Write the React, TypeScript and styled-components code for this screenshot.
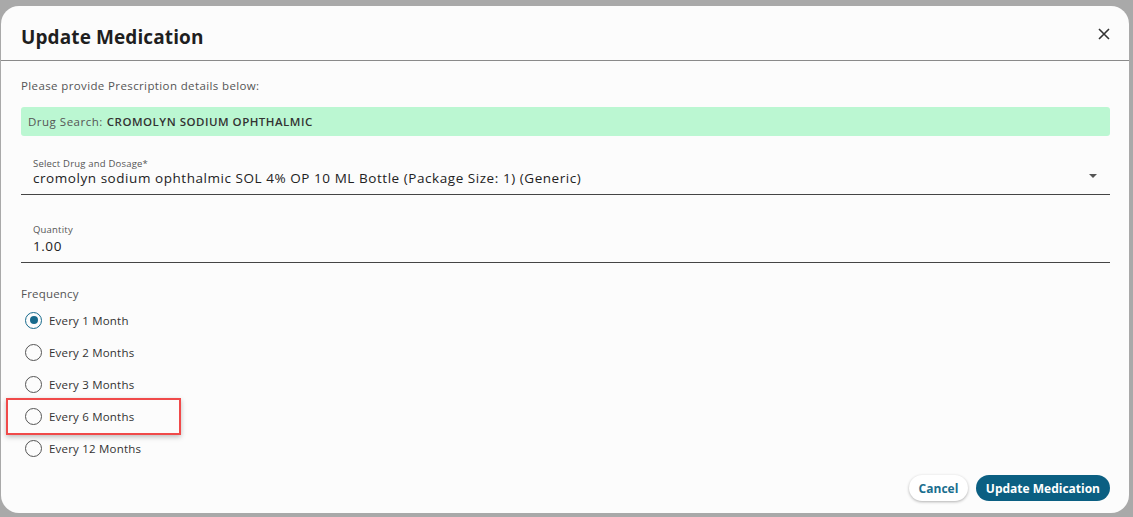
import React from "react";
import styled, { createGlobalStyle } from "styled-components";

const Global = createGlobalStyle`
  html, body { margin: 0; padding: 0; background: #a9a9a9; }
  body { font-family: "Open Sans", "Liberation Sans", sans-serif; }
  * { box-sizing: border-box; }
`;

const Backdrop = styled.div`
  width: 1133px;
  height: 517px;
  padding: 6px 4px 4px 1px;
  background: #a9a9a9;
  overflow: hidden;
`;

const Dialog = styled.div`
  position: relative;
  width: 1128px;
  height: 507px;
  background: #fcfcfc;
  border-radius: 18px;
  display: flex;
  flex-direction: column;
`;

const Header = styled.div`
  height: 55px;
  display: flex;
  align-items: center;
  justify-content: space-between;
  padding: 2px 18px 0 20px;
  border-bottom: 1px solid #8a8a8a;
`;

const Title = styled.h2`
  margin: 0;
  padding-top: 5px;
  font-size: 19px;
  font-weight: 700;
  color: #1f1f1f;
  letter-spacing: 0.1px;
`;

const CloseBtn = styled.button`
  border: none;
  background: none;
  padding: 0;
  width: 14px;
  height: 14px;
  display: flex;
  align-items: center;
  justify-content: center;
  cursor: pointer;
`;

const Body = styled.div`
  flex: 1;
  display: flex;
  flex-direction: column;
  padding: 17px 19px 0 20px;
`;

const Intro = styled.p`
  margin: 0;
  font-size: 11.5px;
  color: #555;
  line-height: 16px;
  letter-spacing: 0.38px;
`;

const SearchBanner = styled.div`
  margin-top: 13px;
  height: 29px;
  border-radius: 3px;
  background: #bbf7d2;
  display: flex;
  align-items: center;
  padding-left: 7px;
  font-size: 11.5px;
  color: #555;
  letter-spacing: 0.5px;
`;

const Strong = styled.span`
  font-weight: 600;
  color: #333;
  margin-left: 4px;
`;

const Field = styled.div<{ $top: number }>`
  margin-top: ${(p) => p.$top}px;
  border-bottom: 1.5px solid #454545;
  padding: 0 13px 8px 12px;
  display: flex;
  align-items: flex-end;
  justify-content: space-between;
`;

const FieldInner = styled.div`
  display: flex;
  flex-direction: column;
`;

const FieldLabel = styled.label`
  font-size: 9.5px;
  color: #555;
  line-height: 13px;
  letter-spacing: 0.2px;
`;

const FieldValue = styled.div<{ $gap?: number }>`
  margin-top: ${(p) => p.$gap ?? 0}px;
  font-size: 13.5px;
  color: #222;
  line-height: 16px;
  letter-spacing: 0.55px;
`;

const Caret = styled.div`
  width: 0;
  height: 0;
  border-left: 4px solid transparent;
  border-right: 4px solid transparent;
  border-top: 4px solid #555;
  margin-bottom: 8px;
`;

const GroupLabel = styled.div`
  margin-top: 23px;
  font-size: 11.5px;
  color: #555;
  line-height: 16px;
  letter-spacing: 0.2px;
`;

const RadioList = styled.div`
  margin-top: 9px;
  display: flex;
  flex-direction: column;
  gap: 14px;
`;

const RadioRow = styled.label`
  display: flex;
  align-items: center;
  gap: 7px;
  padding-left: 4px;
  height: 18px;
  font-size: 11.5px;
  color: #333;
  letter-spacing: 0.2px;
`;

const RadioCircle = styled.span<{ $checked?: boolean }>`
  width: 17px;
  height: 17px;
  border-radius: 50%;
  border: 1.5px solid ${(p) => (p.$checked ? "#176a8c" : "#555")};
  display: flex;
  align-items: center;
  justify-content: center;
  &::after {
    content: "";
    width: 8px;
    height: 8px;
    border-radius: 50%;
    background: #176a8c;
    display: ${(p) => (p.$checked ? "block" : "none")};
  }
`;

const Footer = styled.div`
  display: flex;
  justify-content: flex-end;
  gap: 8px;
  padding: 0 19px 12px 0;
`;

const Button = styled.button<{ $primary?: boolean }>`
  height: 26px;
  border-radius: 13px;
  border: none;
  font-family: inherit;
  font-size: 12px;
  font-weight: 700;
  padding: 0 ${(p) => (p.$primary ? 10 : 9.5)}px;
  cursor: pointer;
  background: ${(p) => (p.$primary ? "#0b5f82" : "#fff")};
  color: ${(p) => (p.$primary ? "#fff" : "#1a6e8e")};
  box-shadow: ${(p) => (p.$primary ? "none" : "0 1px 3px rgba(0,0,0,0.3)")};
`;

const Highlight = styled.div`
  position: absolute;
  left: 5px;
  top: 392px;
  width: 175px;
  height: 37px;
  border: 2px solid #f04a4a;
  box-shadow: 0 2px 5px rgba(0, 0, 0, 0.25);
  pointer-events: none;
`;

const options = ["Every 1 Month", "Every 2 Months", "Every 3 Months", "Every 6 Months", "Every 12 Months"];

export default function App() {
  return (
    <>
      <Global />
      <Backdrop>
        <Dialog>
          <Header>
            <Title>Update Medication</Title>
            <CloseBtn aria-label="close">
              <svg width="12" height="12" viewBox="0 0 12 12">
                <path d="M1 1L11 11M11 1L1 11" stroke="#333" strokeWidth="1.6" />
              </svg>
            </CloseBtn>
          </Header>
          <Body>
            <Intro>Please provide Prescription details below:</Intro>
            <SearchBanner>
              Drug Search:<Strong>CROMOLYN SODIUM OPHTHALMIC</Strong>
            </SearchBanner>
            <Field $top={21}>
              <FieldInner>
                <FieldLabel>Select Drug and Dosage*</FieldLabel>
                <FieldValue>cromolyn sodium ophthalmic SOL 4% OP 10 ML Bottle (Package Size: 1) (Generic)</FieldValue>
              </FieldInner>
              <Caret />
            </Field>
            <Field $top={28}>
              <FieldInner>
                <FieldLabel>Quantity</FieldLabel>
                <FieldValue $gap={2}>1.00</FieldValue>
              </FieldInner>
            </Field>
            <GroupLabel>Frequency</GroupLabel>
            <RadioList>
              {options.map((o, i) => (
                <RadioRow key={o}>
                  <RadioCircle $checked={i === 0} />
                  {o}
                </RadioRow>
              ))}
            </RadioList>
          </Body>
          <Footer>
            <Button>Cancel</Button>
            <Button $primary>Update Medication</Button>
          </Footer>
          <Highlight />
        </Dialog>
      </Backdrop>
    </>
  );
}
